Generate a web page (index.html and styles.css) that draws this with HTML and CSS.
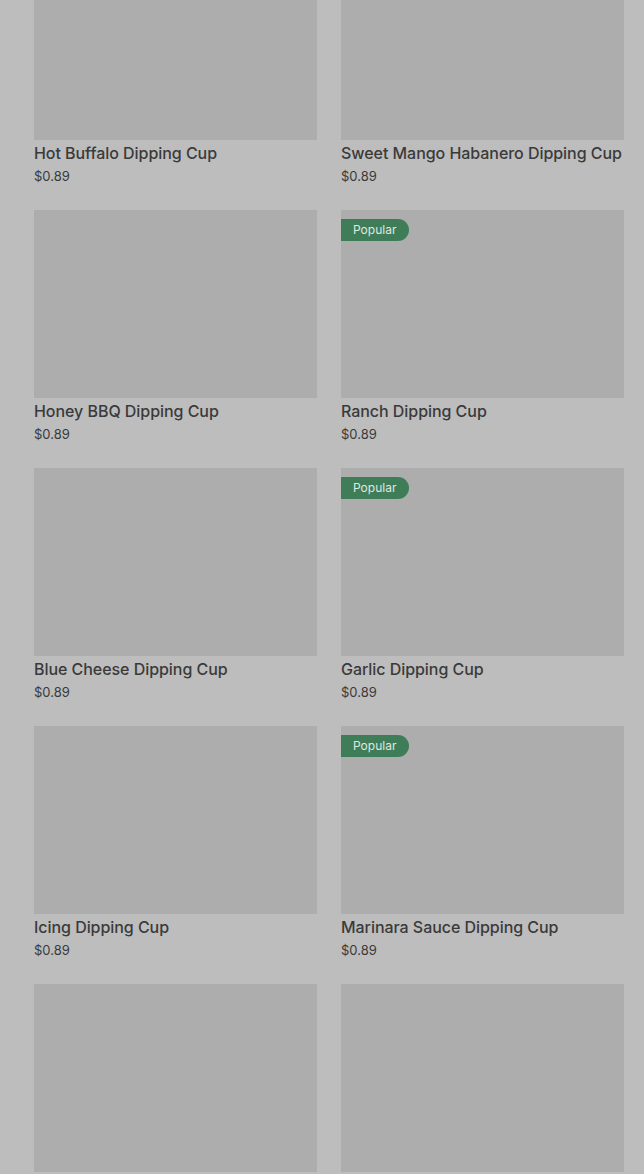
FILE: index.html
```html
<!DOCTYPE html>
<html lang="en">

<head>
    <meta charset="utf-8" />
    <meta name="viewport" content="width=device-width,initial-scale=1.0" />
    <title>Dipping Cups</title>
    <link rel="stylesheet" href="styles.css">
</head>

<body>
    <div class="menu">
        <div class="grid">
            <div class="card">
                <div class="photo"></div>
                <div class="name">Hot Buffalo Dipping Cup</div>
                <div class="price">$0.89</div>
            </div>
            <div class="card">
                <div class="photo"></div>
                <div class="name">Sweet Mango Habanero Dipping Cup</div>
                <div class="price">$0.89</div>
            </div>
            <div class="card">
                <div class="photo"></div>
                <div class="name">Honey BBQ Dipping Cup</div>
                <div class="price">$0.89</div>
            </div>
            <div class="card">
                <div class="photo"><span class="badge">Popular</span></div>
                <div class="name">Ranch Dipping Cup</div>
                <div class="price">$0.89</div>
            </div>
            <div class="card">
                <div class="photo"></div>
                <div class="name">Blue Cheese Dipping Cup</div>
                <div class="price">$0.89</div>
            </div>
            <div class="card">
                <div class="photo"><span class="badge">Popular</span></div>
                <div class="name">Garlic Dipping Cup</div>
                <div class="price">$0.89</div>
            </div>
            <div class="card">
                <div class="photo"></div>
                <div class="name">Icing Dipping Cup</div>
                <div class="price">$0.89</div>
            </div>
            <div class="card">
                <div class="photo"><span class="badge">Popular</span></div>
                <div class="name">Marinara Sauce Dipping Cup</div>
                <div class="price">$0.89</div>
            </div>
            <div class="card">
                <div class="photo"></div>
            </div>
            <div class="card">
                <div class="photo"></div>
            </div>
        </div>
    </div>
</body>

</html>
```

FILE: styles.css
```css
html,
body {
    margin: 0;
    height: 100%;
    overflow: hidden;
}

body {
    background-color: #bdbdbd;
    font-family: Inter, "Noto Sans", sans-serif;
    color: #3a3a3a;
}

.menu {
    padding: 0 20px 0 34px;
}

.grid {
    margin-top: -48px;
    display: grid;
    grid-template-columns: 1fr 1fr;
    column-gap: 24px;
    row-gap: 24px;
}

.photo {
    position: relative;
    height: 188px;
    background-color: #adadad;
}

.badge {
    position: absolute;
    top: 9px;
    left: 0;
    height: 22px;
    line-height: 22px;
    padding: 0 13px 0 12px;
    border-radius: 0 11px 11px 0;
    background-color: #3f7d58;
    color: #dfe8e2;
    font-size: 12px;
}

.name {
    margin-top: 2px;
    font-size: 16px;
    line-height: 22px;
    font-weight: 500;
    letter-spacing: -0.05px;
    white-space: nowrap;
}

.price {
    margin-top: 2px;
    font-size: 13px;
    line-height: 20px;
}
```
